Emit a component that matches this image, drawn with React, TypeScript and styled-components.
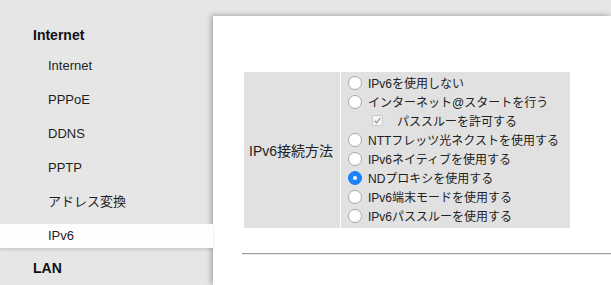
import styled, { createGlobalStyle } from "styled-components";

const GlobalStyle = createGlobalStyle`
  html, body {
    margin: 0;
    padding: 0;
    background: #e6e6e6;
  }
  body {
    font-family: "Liberation Sans", "Noto Sans CJK JP", sans-serif;
    color: #1b1b1b;
  }
`;

const menu = ["Internet", "PPPoE", "DDNS", "PPTP", "アドレス変換", "IPv6"];

const options = [
  { label: "IPv6を使用しない" },
  { label: "インターネット@スタートを行う" },
  { label: "パススルーを許可する", sub: true },
  { label: "NTTフレッツ光ネクストを使用する" },
  { label: "IPv6ネイティブを使用する" },
  { label: "NDプロキシを使用する", checked: true },
  { label: "IPv6端末モードを使用する" },
  { label: "IPv6パススルーを使用する" },
];

export default function App() {
  return (
    <>
      <GlobalStyle />
      <Page>
        <Sidebar>
          <GroupTitle>Internet</GroupTitle>
          <SubList>
            {menu.map((m) => (
              <SubItem key={m} $active={m === "IPv6"}>
                {m}
              </SubItem>
            ))}
          </SubList>
          <GroupTitle>LAN</GroupTitle>
        </Sidebar>
        <Main>
          <Panel>
            <SettingTable>
              <tbody>
                <tr>
                  <LabelCell>IPv6接続方法</LabelCell>
                  <OptionCell>
                    {options.map((o) =>
                      o.sub ? (
                        <SubRow key={o.label}>
                          <Checkbox>
                            <svg width="9" height="9" viewBox="0 0 9 9">
                              <path
                                d="M1.6 4.8 L3.6 6.8 L7.4 1.8"
                                fill="none"
                                stroke="#9a9a9a"
                                strokeWidth="1.3"
                              />
                            </svg>
                          </Checkbox>
                          <span>{o.label}</span>
                        </SubRow>
                      ) : (
                        <OptionRow key={o.label}>
                          <Radio $checked={!!o.checked} />
                          <span>{o.label}</span>
                        </OptionRow>
                      )
                    )}
                  </OptionCell>
                </tr>
              </tbody>
            </SettingTable>
            <Divider />
          </Panel>
        </Main>
      </Page>
    </>
  );
}

const Page = styled.div`
  display: flex;
  width: 611px;
  height: 285px;
  overflow: hidden;
`;

const Sidebar = styled.nav`
  position: relative;
  z-index: 2;
  width: 213px;
  flex-shrink: 0;
  padding-top: 23px;
  display: flex;
  flex-direction: column;
`;

const GroupTitle = styled.div`
  height: 24px;
  line-height: 24px;
  padding-left: 33px;
  font-size: 14px;
  font-weight: bold;
  color: #111;
`;

const SubList = styled.div`
  display: flex;
  flex-direction: column;
  gap: 10px;
  margin: 7px 0 8px;
`;

const SubItem = styled.div<{ $active: boolean }>`
  height: 24px;
  line-height: 24px;
  padding-left: 48px;
  font-size: 13px;
  color: #1e1e1e;
  background: ${(p) => (p.$active ? "#fdfdfd" : "transparent")};
  box-shadow: ${(p) => (p.$active ? "0 2px 3px rgba(0,0,0,0.12)" : "none")};
`;

const Main = styled.main`
  flex: 1;
  padding-top: 16px;
  display: flex;
`;

const Panel = styled.section`
  flex: 1;
  background: #ffffff;
  box-shadow: -2px -1px 5px rgba(0, 0, 0, 0.28);
  padding: 55px 0 0 30px;
`;

const SettingTable = styled.table`
  border-collapse: separate;
  border-spacing: 1px;
  width: 328px;
`;

const LabelCell = styled.td`
  width: 91px;
  background: #e1e1e1;
  padding: 0 0 0 5px;
  font-size: 14px;
  color: #222;
  vertical-align: middle;
  white-space: nowrap;
`;

const OptionCell = styled.td`
  background: #e1e1e1;
  padding: 1px 0 3px 7px;
`;

const OptionRow = styled.div`
  display: flex;
  align-items: center;
  gap: 6px;
  height: 19px;
  font-size: 12px;
  color: #222;
  white-space: nowrap;
`;

const SubRow = styled(OptionRow)`
  padding-left: 24px;
  gap: 14px;
`;

const Radio = styled.span<{ $checked: boolean }>`
  box-sizing: border-box;
  width: 14px;
  height: 14px;
  border-radius: 50%;
  flex-shrink: 0;
  display: flex;
  align-items: center;
  justify-content: center;
  background: ${(p) => (p.$checked ? "#1a84fb" : "#ffffff")};
  border: 1px solid ${(p) => (p.$checked ? "#1a7cf0" : "#a9a9a9")};
  &::after {
    content: "";
    width: 4px;
    height: 4px;
    border-radius: 50%;
    background: #fff;
    display: ${(p) => (p.$checked ? "block" : "none")};
  }
`;

const Checkbox = styled.span`
  box-sizing: border-box;
  width: 11px;
  height: 11px;
  flex-shrink: 0;
  border: 1px solid #c9c9c9;
  border-radius: 2px;
  background: #f5f5f5;
  display: flex;
  align-items: center;
  justify-content: center;
`;

const Divider = styled.hr`
  margin: 24px 0 0 -1px;
  border: 0;
  border-top: 1px solid #9a9a9a;
  border-bottom: 1px solid #eeeeee;
`;
